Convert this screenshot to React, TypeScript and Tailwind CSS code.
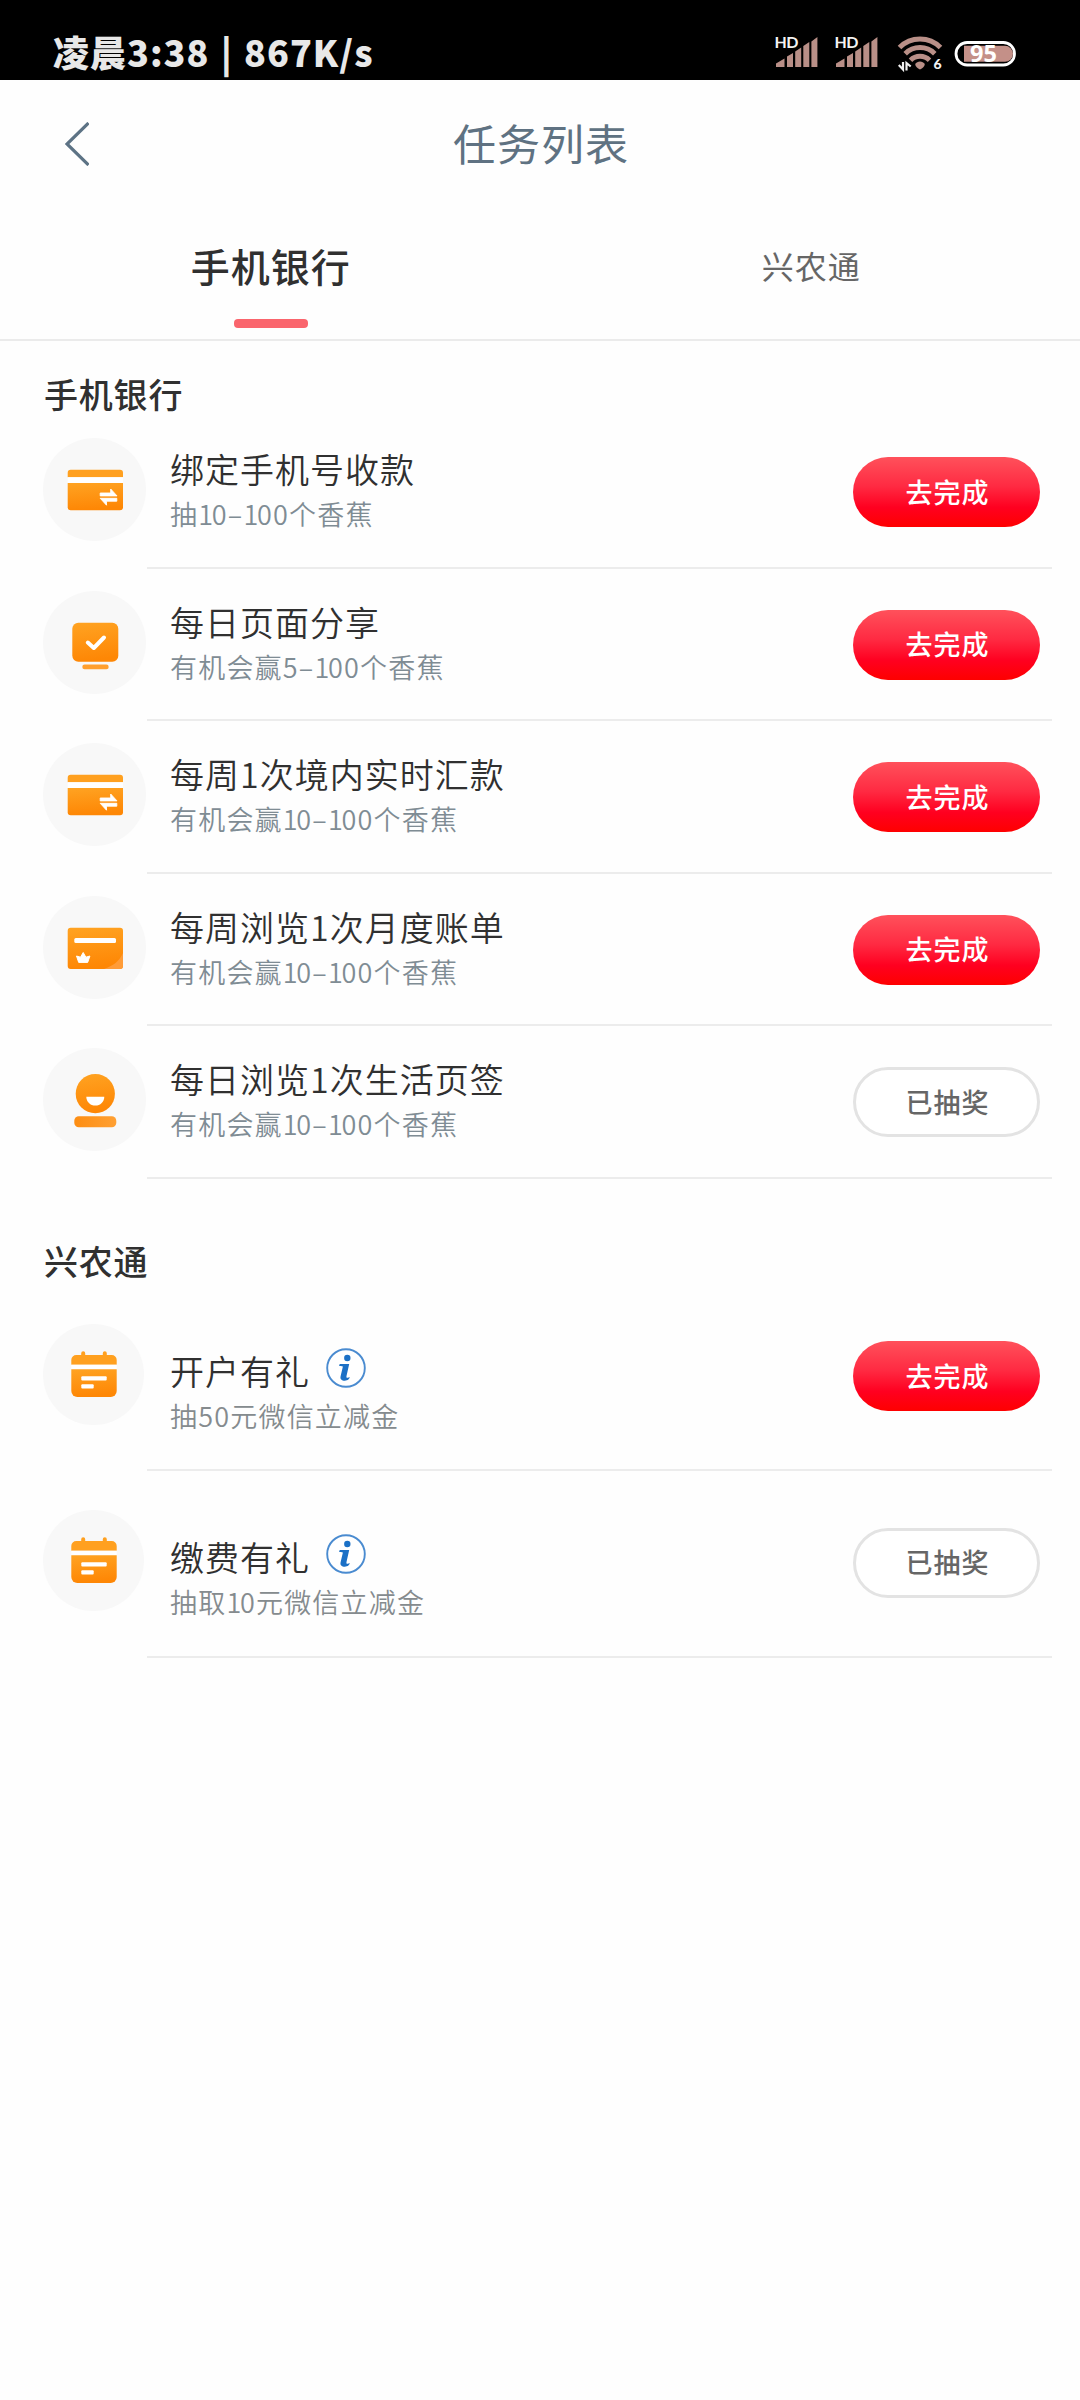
import type { ReactNode } from "react";
import clsx from "clsx";

type IconName = "transfer" | "monitor" | "bill" | "smile" | "calendar";

interface Task {
  id: number;
  icon: IconName;
  title: string;
  desc: string;
  done?: boolean;
  info?: boolean;
}

const BANK_TASKS: Task[] = [
  { id: 1, icon: "transfer", title: "绑定手机号收款", desc: "抽10–100个香蕉" },
  { id: 2, icon: "monitor", title: "每日页面分享", desc: "有机会赢5–100个香蕉" },
  { id: 3, icon: "transfer", title: "每周1次境内实时汇款", desc: "有机会赢10–100个香蕉" },
  { id: 4, icon: "bill", title: "每周浏览1次月度账单", desc: "有机会赢10–100个香蕉" },
  { id: 5, icon: "smile", title: "每日浏览1次生活页签", desc: "有机会赢10–100个香蕉", done: true },
];

const FARM_TASKS: Task[] = [
  { id: 6, icon: "calendar", title: "开户有礼", desc: "抽50元微信立减金", info: true },
  { id: 7, icon: "calendar", title: "缴费有礼", desc: "抽取10元微信立减金", info: true, done: true },
];

const ICONS: Record<IconName, ReactNode> = {
  transfer: (
    <>
      <path d="M27.7 31.7h49.3a3 3 0 0 1 3 3v4.6H24.7v-4.6a3 3 0 0 1 3-3z" fill="#ffa01f" />
      <path d="M24.7 39.3H80V45H24.7z" fill="#fff" />
      <path d="M24.7 45H80v24.3a3 3 0 0 1-3 3H27.7a3 3 0 0 1-3-3z" fill="url(#orange)" />
      <path d="M57.2 55h10.5v-4l6.3 6.9H57.2zM73.8 60.3H57.2l6.3 6.9v-4h10.3z" fill="#fff" stroke="#fff" strokeWidth="0.9" strokeLinejoin="round" />
    </>
  ),
  monitor: (
    <>
      <rect x="29.3" y="31.7" width="46" height="39" rx="6" fill="url(#orange)" />
      <rect x="39.3" y="73.6" width="26.4" height="4.6" rx="2.3" fill="#ff9f2e" />
      <path d="m44.8 51.5 6 5.5L61 46.5" fill="none" stroke="#fff" strokeWidth="4" strokeLinecap="round" strokeLinejoin="round" />
    </>
  ),
  bill: (
    <>
      <rect x="24.7" y="31.7" width="55.3" height="41.3" rx="3" fill="url(#orange)" />
      <path d="M80 57v13a3 3 0 0 1-3 3H61c9-3 15.5-8 19-16z" fill="#ff9c38" />
      <rect x="31.3" y="42.1" width="41.7" height="4.9" rx="1.5" fill="#fff" />
      <path d="m33.5 60 4 1.2 2.7-4.7 2.7 4.7 4-1.2-2.2 6.4h-9z" fill="#fff" stroke="#fff" strokeWidth="1" strokeLinejoin="round" />
    </>
  ),
  smile: (
    <>
      <circle cx="52.3" cy="45.7" r="19.6" fill="url(#orange)" />
      <path d="M43.3 48.7h18c0 5.2-4 8.8-9 8.8s-9-3.6-9-8.8z" fill="#fff" />
      <rect x="31.3" y="68.3" width="42" height="11" rx="4.5" fill="url(#orangeSide)" />
    </>
  ),
  calendar: (
    <>
      <path d="M33.3 32h4.9v-1.7a2 2 0 0 1 4 0V32h17.6v-1.7a2 2 0 0 1 4 0V32h4.9a5 5 0 0 1 5 5v4.7H28.3V37a5 5 0 0 1 5-5z" fill="#ffa01f" />
      <path d="M28.3 41.7h45.4v4.6H28.3z" fill="#fff" />
      <path d="M28.3 46.3h45.4V68a6 6 0 0 1-6 6H34.3a6 6 0 0 1-6-6z" fill="url(#orange)" />
      <rect x="38.3" y="53.2" width="25.4" height="4.3" rx="1" fill="#fff" />
      <rect x="38.3" y="61.2" width="12.4" height="4.3" rx="1" fill="#fff" />
    </>
  ),
};

function TaskIcon({ name }: { name: IconName }) {
  return (
    <svg viewBox="0 0 103 103" className="block size-[103px] overflow-visible">
      <defs>
        <linearGradient id="orange" x1="0" y1="0" x2="0.15" y2="1">
          <stop offset="0" stopColor="#ffa322" />
          <stop offset="1" stopColor="#fe8705" />
        </linearGradient>
        <linearGradient id="orangeSide" x1="0" y1="0" x2="1" y2="0">
          <stop offset="0" stopColor="#fd8d12" />
          <stop offset="1" stopColor="#ffa033" />
        </linearGradient>
      </defs>
      {name === "calendar" ? (
        <circle cx="50.5" cy="51.5" r="50.5" fill="#f8f8f8" />
      ) : (
        <circle cx="51.5" cy="51.5" r="51.5" fill="#f8f8f8" />
      )}
      {ICONS[name]}
    </svg>
  );
}

function InfoIcon() {
  return (
    <svg viewBox="0 0 40 40" className="ml-4 size-10 -translate-y-[3px]">
      <circle cx="20" cy="20" r="18.8" fill="#fff" stroke="#4a8bd0" strokeWidth="1.9" />
      <circle cx="21.3" cy="10" r="3.2" fill="#1b70c6" />
      <path
        d="M13 17.5c0-1 .8-1.5 2-1.5h8.2L20.5 28c-.3 1.5.3 2 1.2 1.8.6-.1 1.2-.4 1.9-.8.3 1.5-1.8 3.7-4.8 3.7-3.2 0-4.9-1.6-4.2-4.5L16.9 18.4c-1.3-.2-2.7-.2-3.9-.9z"
        fill="#1b70c6"
      />
    </svg>
  );
}

function SignalIcon() {
  return (
    <svg viewBox="0 0 44 34" className="h-[34px] w-11 overflow-visible">
      <path
        d="M0 31v-3.5l8.5-5V31zM11 31V20.500l6-3.500v14zM19.200 31V15.500l6-4V31zM27.300 31V10l6-4v25zM35.400 31V5.500l6-4.500v30z"
        fill="#b98f87"
      />
      <text
        x="-1.5"
        y="12"
        fill="#f2f2f2"
        stroke="#000"
        strokeWidth="3"
        paintOrder="stroke"
        fontSize="16"
        fontWeight="700"
        textLength="24"
        fontFamily="Lato, sans-serif"
      >
        HD
      </text>
    </svg>
  );
}

function WifiIcon() {
  return (
    <svg viewBox="0 0 46 36" className="h-9 w-[46px] overflow-visible">
      <g fill="none" stroke="#b98f87" strokeWidth="5">
        <path d="M2.5 11.5a29 29 0 0 1 41 0" />
        <path d="M8.2 17.7a21 21 0 0 1 29.6 0" />
        <path d="M13.5 24.2a13.5 13.5 0 0 1 19 0" />
      </g>
      <path d="M18.2 28c2-3.5 7.6-3.5 9.6 0 0 2.5-2.3 4.5-4.8 5.5-2.5-1-4.8-3-4.8-5.5z" fill="#b98f87" />
      <path d="M6 26v7.5L1.8 29M9.5 34.5V27l4.2 3.5" fill="none" stroke="#f2f2f2" strokeWidth="2.2" />
      <text x="36.5" y="33" fill="#f2f2f2" fontSize="14" fontWeight="900" fontFamily="Lato, sans-serif">
        6
      </text>
    </svg>
  );
}

function BatteryIcon() {
  return (
    <svg viewBox="0 0 62 26" className="h-[26px] w-[62px] overflow-visible">
      <rect x="1" y="1.5" width="58.5" height="22.5" rx="11.2" fill="none" stroke="#fff" strokeWidth="2.8" />
      <path d="M9 4.8h41a8 8 0 0 1 0 16H9z" fill="#c49088" />
      <text x="28.5" y="21.2" textAnchor="middle" fill="#fff" fontSize="23.5" fontWeight="700" fontFamily="'Noto Sans', sans-serif">
        95
      </text>
    </svg>
  );
}

function TaskButton({ done }: { done?: boolean }) {
  return (
    <button
      className={clsx(
        "flex h-[70px] w-[187px] shrink-0 items-center justify-center rounded-full pl-[2px] text-[27px] font-medium tracking-[1px]",
        done
          ? "border-[3px] border-[#e3e3e3] bg-white text-[#666]"
          : "bg-[linear-gradient(to_bottom,#ff515b_0%,#ff2a42_42%,#ff0020_72%,#fe0000_100%)] text-white",
      )}
    >
      {done ? "已抽奖" : "去完成"}
    </button>
  );
}

// The digit 1 is set tighter than the other figures
function Desc({ text }: { text: string }) {
  return text.split(/(1)/).map((part, i) =>
    part === "1" ? (
      <span key={i} className="tracking-[-1.3px]">
        1
      </span>
    ) : (
      part
    ),
  );
}

function TaskRow({ task, tall }: { task: Task; tall?: boolean }) {
  return (
    <li className={clsx("flex pl-[43px]", tall ? "h-[186.6px]" : "h-[152.5px]")}>
      <div className={clsx("w-[104px] shrink-0", tall ? "pt-[38px]" : "pt-[22px]")}>
        <TaskIcon name={task.icon} />
      </div>
      <div className="flex w-[905px] items-start justify-between border-b-2 border-[#ececec] pr-3 pl-[23px]">
        <div className={tall ? "pt-[64.4px]" : "pt-[31px]"}>
          <h3 className="flex h-11 items-center text-[34px] leading-[44px] font-[350] tracking-[1px] text-[#303030]">
            {task.title}
            {task.info && <InfoIcon />}
          </h3>
          <p
            className={clsx(
              "text-[27px] leading-[46px] font-[350] tracking-[1.2px]",
              tall ? "text-[#858b8e]" : "text-[#7f8c94]",
            )}
          >
            <Desc text={task.desc} />
          </p>
        </div>
        <div className={tall ? "pt-[56.5px]" : "pt-[41px]"}>
          <TaskButton done={task.done} />
        </div>
      </div>
    </li>
  );
}

export default function App() {
  return (
    <div className="min-h-[2400px] w-[1080px] bg-[#fefefe] font-['Noto_Sans_CJK_SC',sans-serif]">
      {/* Status bar */}
      <div className="flex h-20 items-start justify-between bg-black pr-[63px] pl-[53px]">
        <span className="pt-[28px] text-[36px] leading-[46px] font-black tracking-[1px] whitespace-pre text-[#e8e8e8] [word-spacing:2px]">
          凌晨3:38 | 867K/s
        </span>
        <div className="flex pt-9">
          <SignalIcon />
          <div className="ml-4">
            <SignalIcon />
          </div>
          <div className="ml-[17px]">
            <WifiIcon />
          </div>
          <div className="ml-3 pt-[5px]">
            <BatteryIcon />
          </div>
        </div>
      </div>

      {/* Title */}
      <header className="flex h-[128px] items-center">
        <svg viewBox="0 0 24 44" className="mb-px ml-[65px] h-11 w-6" fill="none" stroke="#5d7385" strokeWidth="3.2">
          <path d="M23.5 1 2 22l21.5 21" />
        </svg>
        <h1 className="flex-1 pr-[87px] pb-[3px] text-center text-[43px] tracking-[1px] text-[#5f7282]">任务列表</h1>
      </header>

      {/* Tabs */}
      <nav className="flex h-[133px] border-b-2 border-[#ebebeb]">
        <button className="flex flex-1 flex-col items-center pt-[29px] pl-[2px]">
          <span className="text-[39px] leading-[56px] font-medium tracking-[1px] text-[#303030]">手机银行</span>
          <span className="mt-[26px] h-[9px] w-[74px] rounded-[4px] bg-[#fa656d]" />
        </button>
        <button className="flex flex-1 flex-col items-center pt-[29px] pl-[3px]">
          <span className="text-[32px] leading-[56px] tracking-[1px] text-[#666]">兴农通</span>
        </button>
      </nav>

      <section>
        <h2 className="h-[75px] pt-[28.5px] pl-11 text-[34px] leading-[48px] font-medium tracking-[0.8px] text-[#303030]">
          手机银行
        </h2>
        <ul>
          {BANK_TASKS.map((task) => (
            <TaskRow key={task.id} task={task} />
          ))}
        </ul>
      </section>

      <section>
        <h2 className="h-[106px] pt-[58px] pl-11 text-[34px] leading-[48px] font-medium tracking-[0.8px] text-[#303030]">
          兴农通
        </h2>
        <ul>
          {FARM_TASKS.map((task) => (
            <TaskRow key={task.id} task={task} tall />
          ))}
        </ul>
      </section>
    </div>
  );
}
